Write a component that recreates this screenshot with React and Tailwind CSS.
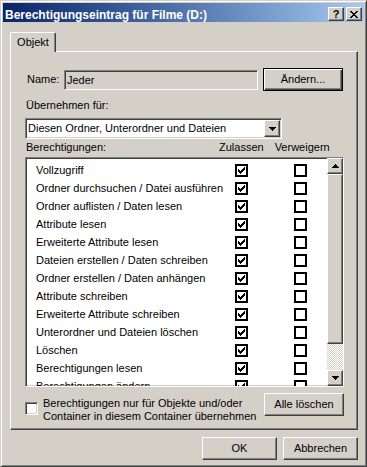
const RAISED =
  "border border-t-white border-l-white border-r-[#404040] border-b-[#404040] shadow-[inset_-1px_-1px_#808080,inset_1px_1px_#d4d0c8] bg-[#d4d0c8]";
const SUNKEN =
  "border border-t-[#808080] border-l-[#808080] border-r-white border-b-white shadow-[inset_1px_1px_#404040,inset_-1px_-1px_#d4d0c8]";

function Arrow({ up }) {
  const rows = up
    ? [
        [3, 0, 1],
        [2, 1, 3],
        [1, 2, 5],
        [0, 3, 7],
      ]
    : [
        [0, 0, 7],
        [1, 1, 5],
        [2, 2, 3],
        [3, 3, 1],
      ];
  return (
    <svg width="7" height="4" viewBox="0 0 7 4" shapeRendering="crispEdges">
      {rows.map(([x, y, w], i) => (
        <rect key={i} x={x} y={y} width={w} height="1" fill="#000" />
      ))}
    </svg>
  );
}

function Check({ checked }) {
  const cols = [
    [3, 5],
    [4, 6],
    [5, 7],
    [6, 6],
    [7, 5],
    [8, 4],
    [9, 3],
  ];
  return (
    <div className="w-[13px] h-[13px] border-2 border-black bg-white shrink-0">
      {checked && (
        <svg width="9" height="9" viewBox="2 2 9 9" shapeRendering="crispEdges">
          {cols.map(([x, y], i) => (
            <rect key={i} x={x} y={y} width="1" height="3" fill="#000" />
          ))}
        </svg>
      )}
    </div>
  );
}

function Btn({ children, className = "" }) {
  return (
    <div className={`${RAISED} flex items-center justify-center leading-[13px] ${className}`}>
      {children}
    </div>
  );
}

export default function App() {
  const rows = [
    "Vollzugriff",
    "Ordner durchsuchen / Datei ausführen",
    "Ordner auflisten / Daten lesen",
    "Attribute lesen",
    "Erweiterte Attribute lesen",
    "Dateien erstellen / Daten schreiben",
    "Ordner erstellen / Daten anhängen",
    "Attribute schreiben",
    "Erweiterte Attribute schreiben",
    "Unterordner und Dateien löschen",
    "Löschen",
    "Berechtigungen lesen",
    "Berechtigungen ändern",
  ];
  const xPixels = [
    [0, 0], [6, 0],
    [1, 1], [5, 1],
    [2, 2], [4, 2],
    [3, 3],
    [2, 4], [4, 4],
    [1, 5], [5, 5],
    [0, 6], [6, 6],
  ];
  return (
    <div className="w-[367px] h-[467px] bg-[#d4d0c8] border border-t-[#d4d0c8] border-l-[#d4d0c8] border-r-[#404040] border-b-[#404040] shadow-[inset_1px_1px_#ffffff,inset_-1px_-1px_#808080] p-[2px] flex flex-col font-['Liberation_Sans',Arial,sans-serif] text-[11px] text-black overflow-hidden">
      {/* Title bar */}
      <div className="h-[19px] shrink-0 flex items-start bg-linear-to-r from-[#0a246a] to-[#a6caf0]">
        <div className="flex-1 pl-[2px] pt-[5px] text-white font-bold text-[12px] leading-[14px] whitespace-nowrap">
          Berechtigungseintrag für Filme (D:)
        </div>
        <div className="flex pt-[4px] pr-[2px] gap-[2px]">
          <div className={`${RAISED} w-[16px] h-[14px] flex items-center justify-center text-[11px] font-bold leading-[11px]`}>
            ?
          </div>
          <div className={`${RAISED} w-[16px] h-[14px] flex items-center justify-center`}>
            <svg width="8" height="7" viewBox="0 0 8 7" shapeRendering="crispEdges">
              {xPixels.map(([x, y], i) => (
                <rect key={i} x={x} y={y} width="2" height="1" fill="#000" />
              ))}
            </svg>
          </div>
        </div>
      </div>

      {/* Client */}
      <div className="flex flex-col pl-[7px] pr-[6px] pt-[10px]">
        <div className="relative z-10 -mb-px w-[46px] h-[20px] bg-[#d4d0c8] border-l border-t border-r border-l-white border-t-white border-r-[#404040] shadow-[inset_-1px_0_#808080] rounded-t-[2px] flex items-center justify-center leading-[13px]">
          Objekt
        </div>
        <div className="h-[379px] border border-t-white border-l-white border-r-[#404040] border-b-[#404040] shadow-[inset_-1px_-1px_#808080] pt-[16px] pl-[14px]">
          <div className="w-[319px] flex flex-col">
            {/* Name row */}
            <div className="flex items-center h-[23px]">
              <div className="w-[39px] pl-[2px] leading-[13px]">Name:</div>
              <div className={`${SUNKEN} w-[194px] h-[20px] bg-[#d4d0c8] pl-[2px] leading-[18px]`}>Jeder</div>
              <div className="ml-[5px] w-[80px] h-[23px] border border-black shadow-[inset_1px_1px_#ffffff,inset_-1px_-1px_#404040,inset_-2px_-2px_#808080] flex items-center justify-center leading-[13px]">
                Ändern...
              </div>
            </div>

            <div className="mt-[8px] leading-[13px] pl-px">Übernehmen für:</div>

            {/* Combo */}
            <div className={`${SUNKEN} mt-[6px] w-[257px] h-[21px] bg-white flex items-center`}>
              <div className="flex-1 pl-[2px] leading-[17px] whitespace-nowrap">Diesen Ordner, Unterordner und Dateien</div>
              <Btn className="w-[16px] h-[17px] mr-px">
                <Arrow />
              </Btn>
            </div>

            {/* Header */}
            <div className="mt-[2px] flex leading-[13px] whitespace-nowrap">
              <span className="w-[194px] pl-px">Berechtigungen:</span>
              <span>Zulassen</span>
              <span className="ml-[11px]">Verweigern</span>
            </div>

            {/* List */}
            <div className={`${SUNKEN} mt-[3px] h-[230px] bg-white flex`}>
              <div className="flex-1 overflow-hidden pt-[3px]">
                {rows.map((r) => (
                  <div key={r} className="flex items-center h-[18px] pl-[10px]">
                    <div className="w-[199px] whitespace-nowrap leading-[13px]">{r}</div>
                    <Check checked />
                    <div className="ml-[46px]">
                      <Check />
                    </div>
                  </div>
                ))}
              </div>
              <div className="w-[16px] flex flex-col">
                <Btn className="w-[16px] h-[16px]">
                  <Arrow up />
                </Btn>
                <div className={`${RAISED} w-[16px] h-[170px]`} />
                <div className="flex-1 bg-[image:repeating-conic-gradient(#ffffff_0%_25%,#d4d0c8_0%_50%)] bg-[length:2px_2px]" />
                <Btn className="w-[16px] h-[16px]">
                  <Arrow />
                </Btn>
              </div>
            </div>

            {/* Bottom row */}
            <div className="mt-[6px] flex justify-between items-start">
              <div className="flex items-start">
                <div className={`${SUNKEN} mt-[9px] w-[13px] h-[13px] bg-white shrink-0`} />
                <div className="ml-[5px] mt-[4px] leading-[13px] whitespace-nowrap">
                  Berechtigungen nur für Objekte und/oder
                  <br />
                  Container in diesem Container übernehmen
                </div>
              </div>
              <Btn className="w-[80px] h-[23px]">Alle löschen</Btn>
            </div>
          </div>
        </div>

        {/* Footer */}
        <div className="mt-[7px] flex justify-end gap-[6px]">
          <Btn className="w-[75px] h-[23px]">OK</Btn>
          <Btn className="w-[75px] h-[23px]">Abbrechen</Btn>
        </div>
      </div>
    </div>
  );
}
